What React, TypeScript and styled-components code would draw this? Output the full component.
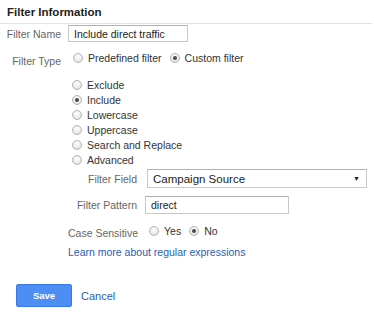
import React from "react"
import styled, { createGlobalStyle } from "styled-components"

const Global = createGlobalStyle`
    body {
        margin: 0;
        background: #fff;
        font-family: Arial, "Liberation Sans", sans-serif;
        font-size: 10.5px;
        color: #333;
    }
`

const Page = styled.div`
    width: 374px;
    height: 316px;
    box-sizing: border-box;
    padding: 6px 2px 0 0;
`

const Header = styled.div`
    font-size: 11.5px;
    font-weight: bold;
    color: #222;
    padding: 0 0 5px 7px;
    border-bottom: 1px solid #e3e3e3;
`

const Row = styled.div<{ $top?: number }>`
    display: flex;
    align-items: center;
    margin-top: ${(p) => p.$top ?? 0}px;
`

const Label = styled.div<{ $width: number; $dy?: number }>`
    width: ${(p) => p.$width}px;
    text-align: right;
    white-space: nowrap;
    color: #666;
    flex-shrink: 0;
    position: relative;
    top: ${(p) => p.$dy ?? 0}px;
`

const TextBox = styled.div<{ $width: number; $height: number }>`
    width: ${(p) => p.$width}px;
    height: ${(p) => p.$height}px;
    box-sizing: border-box;
    border: 1px solid #c9c9c9;
    border-top-color: #b0b0b0;
    padding: 0 5px;
    display: flex;
    align-items: center;
    color: #222;
    background: #fff;
`

const Select = styled(TextBox)`
    justify-content: space-between;
    font-size: 11.5px;
    border-radius: 1px;
`

const Arrow = styled.span`
    font-size: 7px;
    color: #222;
    margin-right: 1px;
`

const RadioGroup = styled.div`
    display: flex;
    align-items: center;
    gap: 8px;
`

const Choice = styled.label`
    display: flex;
    align-items: center;
    gap: 5px;
    color: #333;
    height: 15px;
    white-space: nowrap;
`

const Dot = styled.span<{ $on?: boolean }>`
    width: 10px;
    height: 10px;
    box-sizing: border-box;
    border-radius: 50%;
    border: 1px solid #b4b4b4;
    background: radial-gradient(circle at 50% 35%, #fff 0%, #eee 50%, #d6d6d6 100%);
    display: inline-flex;
    align-items: center;
    justify-content: center;
    flex-shrink: 0;
    &::after {
        content: "";
        width: 4px;
        height: 4px;
        border-radius: 50%;
        background: ${(p) => (p.$on ? "#4a4a4a" : "transparent")};
    }
`

const OptionList = styled.div`
    margin: 12px 0 0 72px;
    display: flex;
    flex-direction: column;
`

const Sub = styled.div`
    margin-left: 68px;
`

const Link = styled.a`
    display: block;
    color: #2a5db0;
    text-decoration: none;
    margin: 8px 0 0 68px;
`

const Footer = styled.div`
    display: flex;
    align-items: center;
    gap: 9px;
    margin: 26px 0 0 16px;
`

const SaveButton = styled.button`
    width: 56px;
    height: 23px;
    border: 1px solid #3b7ae6;
    border-radius: 2px;
    background: #4d8ef5;
    color: #fff;
    font-family: Arial, "Liberation Sans", sans-serif;
    font-weight: bold;
    font-size: 9.5px;
`

const Cancel = styled.a`
    color: #2a5db0;
    font-size: 11px;
`

const options = ["Exclude", "Include", "Lowercase", "Uppercase", "Search and Replace", "Advanced"]

export default function App() {
    return (
        <Page>
            <Global />
            <Header>Filter Information</Header>
            <Row $top={1}>
                <Label $width={61}>Filter Name</Label>
                <TextBox $width={120} $height={17} style={{ marginLeft: 7 }}>
                    Include direct traffic
                </TextBox>
            </Row>
            <Row $top={8}>
                <Label $width={61} $dy={3}>Filter Type</Label>
                <RadioGroup style={{ marginLeft: 12 }}>
                    <Choice><Dot />Predefined filter</Choice>
                    <Choice><Dot $on />Custom filter</Choice>
                </RadioGroup>
            </Row>
            <OptionList>
                {options.map((o) => (
                    <Choice key={o}>
                        <Dot $on={o === "Include"} />
                        {o}
                    </Choice>
                ))}
            </OptionList>
            <Sub>
                <Row $top={2}>
                    <Label $width={69}>Filter Field</Label>
                    <Select $width={220} $height={19} style={{ marginLeft: 10 }}>
                        Campaign Source
                        <Arrow>▼</Arrow>
                    </Select>
                </Row>
                <Row $top={8}>
                    <Label $width={69}>Filter Pattern</Label>
                    <TextBox $width={144} $height={18} style={{ marginLeft: 8 }}>
                        direct
                    </TextBox>
                </Row>
                <Row $top={9}>
                    <Label $width={69} $dy={2}>Case Sensitive</Label>
                    <RadioGroup style={{ marginLeft: 12 }}>
                        <Choice><Dot />Yes</Choice>
                        <Choice><Dot $on />No</Choice>
                    </RadioGroup>
                </Row>
            </Sub>
            <Link>Learn more about regular expressions</Link>
            <Footer>
                <SaveButton>Save</SaveButton>
                <Cancel>Cancel</Cancel>
            </Footer>
        </Page>
    )
}
